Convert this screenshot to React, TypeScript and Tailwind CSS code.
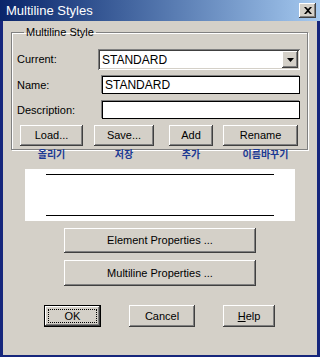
import React from "react";

const raised =
  "bg-[#d4d0c8] shadow-[inset_-1px_-1px_0_#404040,inset_1px_1px_0_#ffffff,inset_-2px_-2px_0_#808080,inset_2px_2px_0_#d4d0c8]";
const sunken =
  "bg-white shadow-[inset_1px_1px_0_#808080,inset_-1px_-1px_0_#ffffff,inset_2px_2px_0_#404040,inset_-2px_-2px_0_#d4d0c8]";

const Btn: React.FC<{ label: React.ReactNode; className?: string }> = ({ label, className }) => (
  <button type="button" className={`${raised} flex items-center justify-center text-[11px] text-black ${className ?? ""}`}>
    {label}
  </button>
);

// widths + left gaps taken from the dialog
const TopButtons = [
  { label: "Load...", ko: "올리기", cls: "ml-[3px] w-[63px]", koCls: "" },
  { label: "Save...", ko: "저장", cls: "ml-[11px] w-[60px]", koCls: "" },
  { label: "Add", ko: "추가", cls: "ml-[15px] w-[44px]", koCls: "" },
  { label: "Rename", ko: "이름바꾸기", cls: "ml-[10px] w-[75px]", koCls: "pl-[10px]" },
];

export default function App() {
  return (
    <div
      className="w-[320px] h-[357px] bg-[#16267c] pl-[3px] pr-[3px] pb-[2px] flex flex-col overflow-hidden"
      style={{ fontFamily: '"Liberation Sans", Arial, sans-serif' }}
    >
      {/* title bar */}
      <div className="h-[21px] -ml-[3px] -mr-[3px] pl-[6px] pr-[4px] flex items-center justify-between bg-gradient-to-r from-[#0a246a] to-[#a6caf0] shrink-0">
        <span className="text-white text-[13px] leading-none">Multiline Styles</span>
        <button type="button" className={`${raised} w-[17px] h-[15px] flex items-center justify-center`}>
          <svg width="8" height="7" viewBox="0 0 8 7">
            <path d="M0 0h2l2 2 2-2h2L5 3.5 8 7H6L4 5 2 7H0l3-3.5z" fill="#000" />
          </svg>
        </button>
      </div>

      {/* body */}
      <div className="flex-1 bg-[#d4d0c8] flex flex-col">
        <fieldset className="mt-[5px] ml-[8px] mr-[9px] border border-[#808080] shadow-[inset_1px_1px_0_#ffffff,1px_1px_0_#ffffff] pl-[5px] pr-[7px] pt-[10px] pb-[3px]">
          <legend className="ml-[7px] px-[2px] text-[11px] leading-[13px] text-black">Multiline Style</legend>

          <div className="flex items-center h-[21px]">
            <span className="w-[81px] text-[11px]">Current:</span>
            <div className={`${sunken} flex-1 h-[21px] flex items-center justify-between pl-[4px] pr-[2px]`}>
              <span className="text-[12px]">STANDARD</span>
              <div className={`${raised} w-[16px] h-[17px] flex items-center justify-center`}>
                <svg width="7" height="4" viewBox="0 0 7 4">
                  <path d="M0 0h7L3.5 4z" fill="#000" />
                </svg>
              </div>
            </div>
          </div>

          <div className="flex items-center h-[18px] mt-[6px]">
            <span className="w-[85px] text-[11px]">Name:</span>
            <div className="flex-1 h-[18px] bg-white border border-black shadow-[-1px_-1px_0_#808080] flex items-center pl-[2px] text-[12px]">
              STANDARD
            </div>
          </div>

          <div className="flex items-center h-[18px] mt-[7px]">
            <span className="w-[85px] text-[11px]">Description:</span>
            <div className="flex-1 h-[18px] bg-white border border-black shadow-[-1px_-1px_0_#808080]" />
          </div>

          <div className="flex items-center mt-[6px]">
            {TopButtons.map((b) => (
              <Btn key={b.label} label={b.label} className={`${b.cls} h-[21px]`} />
            ))}
          </div>
        </fieldset>

        {/* korean hints */}
        <div className="flex ml-[14px] h-[12px] -mt-[2px]">
          {TopButtons.map((b) => (
            <span
              key={b.ko}
              className={`${b.cls} ${b.koCls} text-center text-[10px] leading-[12px] font-bold text-[#1c3a94]`}
              style={{ fontFamily: '"Noto Sans CJK KR", sans-serif' }}
            >
              {b.ko}
            </span>
          ))}
        </div>

        {/* preview */}
        <div className="mt-[9px] ml-[22px] w-[270px] h-[52px] bg-white flex flex-col justify-between items-center pt-[5px] pb-[5px]">
          <div className="w-[228px] h-[1px] bg-black" />
          <div className="w-[228px] h-[1px] bg-black" />
        </div>

        <Btn label="Element Properties ..." className="mt-[7px] ml-[61px] w-[192px] h-[25px]" />
        <Btn label="Multiline Properties ..." className="mt-[7px] ml-[61px] w-[192px] h-[26px]" />

        <div className="flex mt-[19px] ml-[41px] gap-[28px]">
          <button
            type="button"
            className="w-[57px] h-[22px] border border-black bg-[#d4d0c8] shadow-[inset_-1px_-1px_0_#404040,inset_1px_1px_0_#ffffff,inset_-2px_-2px_0_#808080] p-[3px] flex"
          >
            <span className="flex-1 border border-dotted border-black flex items-center justify-center text-[11px]">OK</span>
          </button>
          <Btn label="Cancel" className="w-[66px] h-[22px]" />
          <Btn
            label={
              <span>
                <span className="underline">H</span>elp
              </span>
            }
            className="w-[52px] h-[22px]"
          />
        </div>
      </div>
    </div>
  );
}
